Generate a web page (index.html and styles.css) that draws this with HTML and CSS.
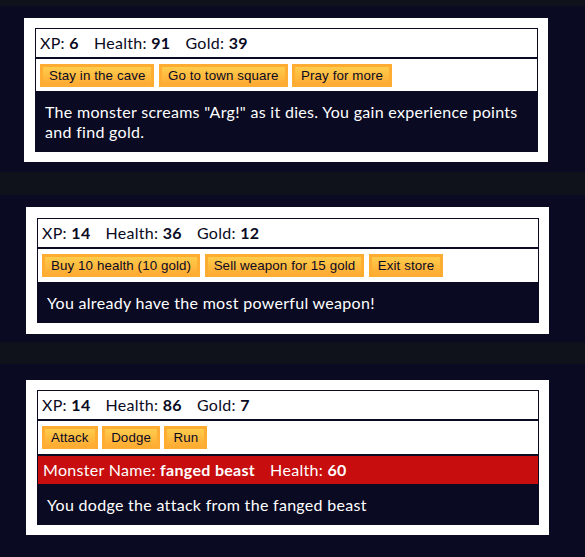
FILE: index.html
```html
<!DOCTYPE html>
<html>
<head>
<meta charset="utf-8">
<link rel="stylesheet" href="styles.css">
</head>
<body>
<div class="band band-top"></div>
<section class="shot shot-1">
  <div class="game game-1">
    <div class="stats">
      <span class="stat">XP: <strong>6</strong></span>
      <span class="stat">Health: <strong>91</strong></span>
      <span class="stat">Gold: <strong>39</strong></span>
    </div>
    <div class="controls">
      <button>Stay in the cave</button>
      <button>Go to town square</button>
      <button>Pray for more</button>
    </div>
    <div class="text">The monster screams "Arg!" as it dies. You gain experience points and find gold.</div>
  </div>
</section>
<div class="band band-1"></div>
<section class="shot shot-2">
  <div class="game">
    <div class="stats">
      <span class="stat">XP: <strong>14</strong></span>
      <span class="stat">Health: <strong>36</strong></span>
      <span class="stat">Gold: <strong>12</strong></span>
    </div>
    <div class="controls">
      <button>Buy 10 health (10 gold)</button>
      <button>Sell weapon for 15 gold</button>
      <button>Exit store</button>
    </div>
    <div class="text">You already have the most powerful weapon!</div>
  </div>
</section>
<div class="band band-2"></div>
<section class="shot shot-3">
  <div class="game">
    <div class="stats">
      <span class="stat">XP: <strong>14</strong></span>
      <span class="stat">Health: <strong>86</strong></span>
      <span class="stat">Gold: <strong>7</strong></span>
    </div>
    <div class="controls">
      <button>Attack</button>
      <button>Dodge</button>
      <button>Run</button>
    </div>
    <div class="monster-stats">
      <span class="stat">Monster Name: <strong>fanged beast</strong></span>
      <span class="stat">Health: <strong>60</strong></span>
    </div>
    <div class="text">You dodge the attack from the fanged beast</div>
  </div>
</section>
</body>
</html>
```

FILE: styles.css
```css
html, body {
  margin: 0;
  padding: 0;
}
body {
  background: #0a0a23;
  font-family: Lato, "DejaVu Sans", sans-serif;
  font-size: 16px;
  letter-spacing: 0.3px;
  width: 585px;
  height: 557px;
  overflow: hidden;
}
.band {
  background: #0f121b;
}
.band-top { height: 6px; }
.band-1 { height: 23px; }
.band-2 { height: 22px; }

.shot {
  box-sizing: border-box;
}
.shot-1 {
  height: 166px;
  padding: 12px 0 0 24px;
}
.shot-2 {
  height: 147px;
  padding: 12px 0 0 26px;
}
.shot-3 {
  height: 193px;
  padding: 16px 0 0 26px;
}

.game {
  box-sizing: border-box;
  width: 523px;
  background: #ffffff;
  padding: 10px 10px 10px 11px;
  color: #ffffff;
}
.game-1 {
  width: 524px;
}
.shot-2 .game {
  padding-top: 11px;
  padding-bottom: 11px;
}

.stats, .controls, .monster-stats {
  border: 1px solid #0a0a23;
  padding: 5px 4px;
  color: #0a0a23;
  line-height: 18px;
}
.stats {
  display: flex;
  gap: 5px;
}
.stat {
  padding-right: 10px;
}
.stat strong {
  font-weight: 700;
}
.controls {
  display: flex;
  gap: 4.5px;
  padding-top: 5px;
  padding-bottom: 5px;
}
.game-1 .controls {
  padding-bottom: 4px;
}
.controls button {
  font-family: "Liberation Sans", Arial, sans-serif;
  font-size: 13.333px;
  letter-spacing: 0.1px;
  line-height: 15px;
  height: 23px;
  padding: 1px 6px;
  color: #0a0a23;
  background-color: #feac32;
  background-image: linear-gradient(#fecc4c, #ffac33);
  border: 3px solid #feac32;
  border-radius: 0;
  margin: 0;
}
.monster-stats {
  display: flex;
  gap: 5px;
  background: #c70d0d;
  color: #ffffff;
  padding-left: 5px;
}
.text {
  background: #0a0a23;
  color: #ffffff;
  padding: 10px;
  line-height: 20px;
}
```
